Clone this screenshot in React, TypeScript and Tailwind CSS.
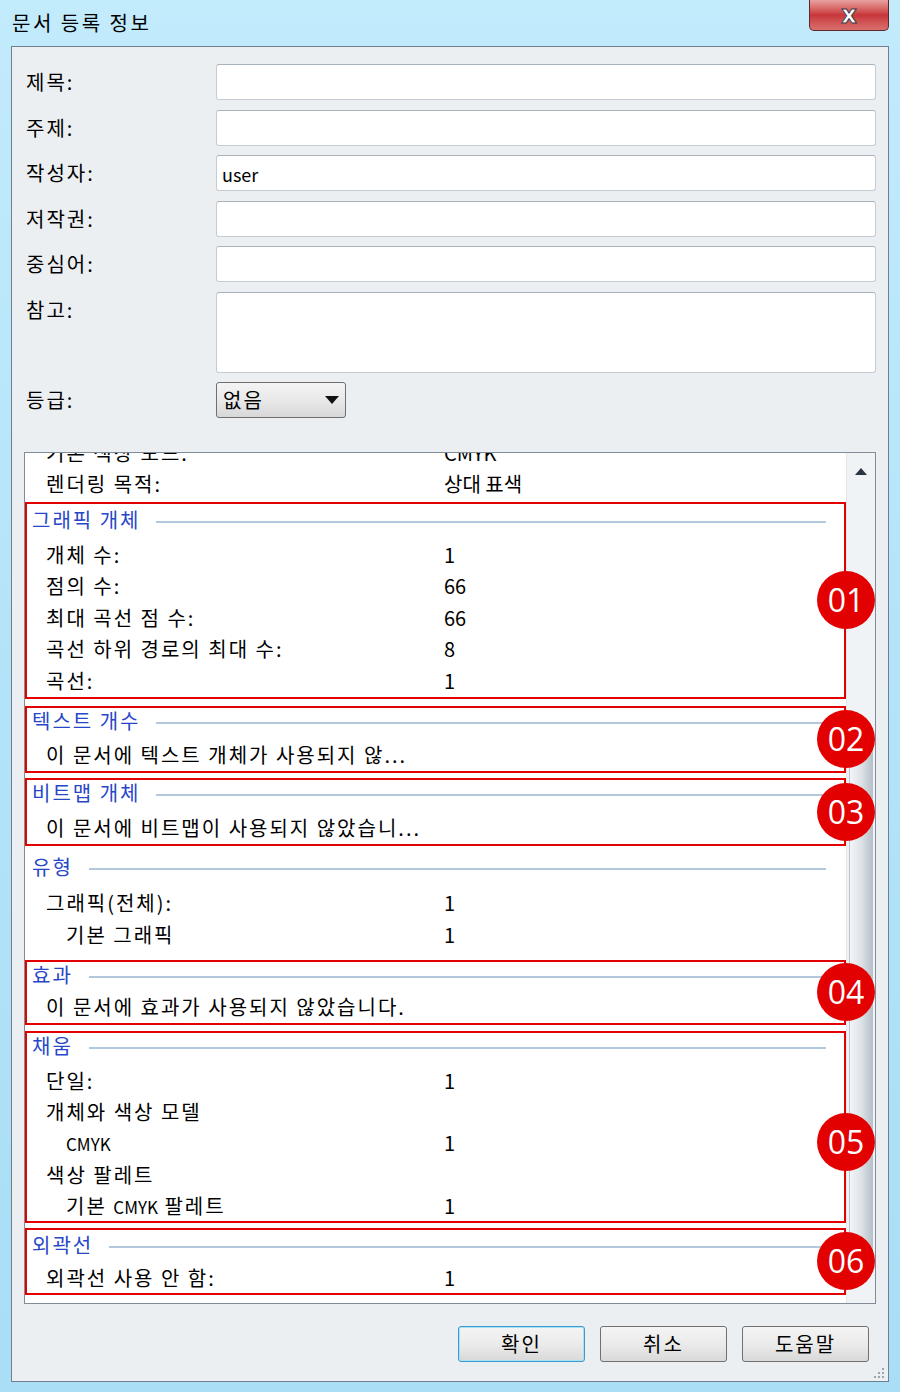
import type { ReactNode } from 'react';

const FONT = { fontFamily: '"Noto Sans CJK KR", "Noto Sans", sans-serif' };

type Row = { label: ReactNode; value?: string; indent?: boolean; h?: number };

/**
 * 속성 목록의 한 줄
 */
function PropRow({ label, value, indent, h = 31.5 }: Row) {
  return (
    <div className="flex items-center text-[20px] leading-none text-black" style={{ height: h }}>
      <div className={`w-[417px] shrink-0 tracking-[2px] ${indent ? 'pl-[39px]' : 'pl-[19px]'}`}>{label}</div>
      <div>{value}</div>
    </div>
  );
}

/**
 * 파란 제목 + 구분선
 */
function SectionHeader({ title, h, ty = 0 }: { title: string; h: number; ty?: number }) {
  return (
    <div className="flex items-start pl-[5px] pr-[18px]" style={{ height: h, paddingTop: ty }}>
      <span className="text-[20px] leading-[26px] tracking-[2px] text-[#2747c9]">{title}</span>
      <div className="mt-[14px] ml-[16px] h-[2px] flex-1 bg-[#b3c8dd]"></div>
    </div>
  );
}

/**
 * 번호 배지
 */
function Badge({ n, top }: { n: string; top?: number }) {
  return (
    <div
      className={`absolute right-[-31px] z-10 flex h-[58px] w-[58px] items-center justify-center rounded-full bg-[#e20000] text-[32px] leading-none text-white ${top === undefined ? 'top-1/2 -translate-y-1/2' : ''}`}
      style={{ fontFamily: '"Open Sans", "Noto Sans", sans-serif', ...(top !== undefined ? { top } : {}) }}
    >
      {n}
    </div>
  );
}

function Box({
  children,
  red,
  badge,
  badgeTop,
  className = '',
}: {
  children: ReactNode;
  red?: boolean;
  badge?: string;
  badgeTop?: number;
  className?: string;
}) {
  return (
    <div className={`relative border-2 ${red ? 'border-[#e20000]' : 'border-transparent'} ${className}`}>
      {children}
      {badge && <Badge n={badge} top={badgeTop} />}
    </div>
  );
}

function Field({ label, h = 36, value }: { label: string; h?: number; value?: string }) {
  return (
    <div className="flex items-start">
      <div className="flex h-[36px] w-[190px] shrink-0 items-center text-[20px] tracking-[2px] text-black">{label}</div>
      <div
        className="flex flex-1 items-start rounded-[3px] border border-[#c5ccd3] border-t-[#aab3bc] bg-white px-[5px] text-[18px] text-black"
        style={{ height: h }}
      >
        {value && <span className="mt-[5px]">{value}</span>}
      </div>
    </div>
  );
}

function Button({ label, primary }: { label: string; primary?: boolean }) {
  return (
    <button
      className={`flex h-[36px] w-[127px] items-center justify-center rounded-[3px] border bg-gradient-to-b from-[#f4f4f4] via-[#ebebeb] to-[#d9d9d9] text-[20px] tracking-[2px] text-black ${
        primary ? 'border-[#3a9ccc] shadow-[inset_0_0_0_1px_#a8e0f5]' : 'border-[#707070]'
      }`}
    >
      {label}
    </button>
  );
}

const Cmyk = () => <span className="text-[17px] tracking-normal">CMYK</span>;

export default function App() {
  return (
    <div
      className="relative h-[1392px] w-[900px] overflow-hidden bg-gradient-to-b from-[#c2ebfc] via-[#b3e3f8] to-[#a9def6]"
      style={FONT}
    >
      {/* 제목 표시줄 */}
      <div className="flex h-[46px] items-center pl-[12px]">
        <span className="text-[20px] tracking-[2.5px] text-black">문서 등록 정보</span>
      </div>
      <div className="absolute top-0 right-[11px] flex h-[31px] w-[80px] items-center justify-center rounded-b-[5px] border border-t-0 border-[#5c2a2a] bg-gradient-to-b from-[#e8a0a0] via-[#c7353a] to-[#d9706f]">
        <span
          className="text-[24px] font-bold leading-none text-white"
          style={{ fontFamily: '"DejaVu Sans", sans-serif', WebkitTextStroke: '1px #3a3a4a' }}
        >
          x
        </span>
      </div>

      {/* 본문 패널 */}
      <div className="mx-[11px] flex h-[1336px] flex-col border border-[#6d7f90] bg-[#eceff1]">
        {/* 입력 필드 */}
        <div className="flex flex-col gap-[9.5px] pt-[17px] pr-[12px] pl-[14px]">
          <Field label="제목:" />
          <Field label="주제:" />
          <Field label="작성자:" value="user" />
          <Field label="저작권:" />
          <Field label="중심어:" />
          <Field label="참고:" h={81} />
          <div className="flex items-start">
            <div className="flex h-[36px] w-[190px] shrink-0 items-center text-[20px] tracking-[2px] text-black">등급:</div>
            <div className="flex h-[36px] w-[130px] items-center justify-between rounded-[3px] border border-[#6f6f6f] bg-gradient-to-b from-[#f4f4f4] via-[#e9e9e9] to-[#d8d8d8] pr-[6px] pl-[6px] text-[20px] tracking-[2px] text-black">
              <span>없음</span>
              <svg width="14" height="8" viewBox="0 0 14 8">
                <path d="M0 0 L14 0 L7 8 Z" fill="#111" />
              </svg>
            </div>
          </div>
        </div>

        {/* 속성 목록 */}
        <div className="mx-[12px] mt-[34px] flex h-[852px] overflow-hidden border border-[#828c96] bg-white">
          <div className="relative flex-1">
            <div className="-mt-[18px] flex flex-col">
              <Box>
                <PropRow label="기본 색상 모드:" value="CMYK" />
                <PropRow label="렌더링 목적:" value="상대 표색" />
              </Box>
              <Box red badge="01">
                <SectionHeader title="그래픽 개체" h={35} ty={3} />
                <PropRow label="개체 수:" value="1" />
                <PropRow label="점의 수:" value="66" />
                <PropRow label="최대 곡선 점 수:" value="66" />
                <PropRow label="곡선 하위 경로의 최대 수:" value="8" />
                <PropRow label="곡선:" value="1" />
              </Box>
              <Box red badge="02" className="mt-[7px]">
                <SectionHeader title="텍스트 개수" h={32} />
                <PropRow label="이 문서에 텍스트 개체가 사용되지 않..." />
              </Box>
              <Box red badge="03" className="mt-[5px]">
                <SectionHeader title="비트맵 개체" h={32} />
                <PropRow label="이 문서에 비트맵이 사용되지 않았습니..." />
              </Box>
              <Box>
                <div className="h-[6px]"></div>
                <SectionHeader title="유형" h={34} />
                <PropRow label="그래픽(전체):" value="1" />
                <PropRow label="기본 그래픽" value="1" indent />
              </Box>
              <Box red badge="04" className="mt-[7px]">
                <SectionHeader title="효과" h={30} ty={-3} />
                <PropRow label="이 문서에 효과가 사용되지 않았습니다." />
              </Box>
              <Box red badge="05" badgeTop={80} className="mt-[5.5px]">
                <SectionHeader title="채움" h={33} />
                <PropRow label="단일:" value="1" h={31} />
                <PropRow label="개체와 색상 모델" h={31} />
                <PropRow label={<Cmyk />} value="1" indent h={31.5} />
                <PropRow label="색상 팔레트" h={31.5} />
                <PropRow label={<>기본 <Cmyk /> 팔레트</>} value="1" indent h={30} />
              </Box>
              <Box red badge="06" className="mt-[5px]">
                <SectionHeader title="외곽선" h={34} ty={2} />
                <PropRow label="외곽선 사용 안 함:" value="1" h={29} />
              </Box>
            </div>
          </div>

          {/* 스크롤바 */}
          <div className="flex w-[29px] shrink-0 flex-col border-l border-[#e3e7ea] bg-[#f0f3f5]">
            <div className="flex h-[36px] items-center justify-center">
              <svg width="12" height="7" viewBox="0 0 12 7">
                <path d="M0 7 L6 0 L12 7 Z" fill="#2a3540" />
              </svg>
            </div>
            <div className="mt-[255px] mx-[2px] h-[523px] rounded-[2px] border border-[#b9c3cc] bg-gradient-to-r from-[#f3f5f7] via-[#dde3e8] to-[#b9c2ca]"></div>
            <div className="flex h-[20px] items-center justify-center">
              <svg width="10" height="6" viewBox="0 0 10 6">
                <path d="M0 0 L10 0 L5 6 Z" fill="#5b6670" />
              </svg>
            </div>
          </div>
        </div>

        {/* 버튼 */}
        <div className="mt-[22px] flex justify-end gap-[15px] pr-[19px]">
          <Button label="확인" primary />
          <Button label="취소" />
          <Button label="도움말" />
        </div>

        <div className="mt-auto flex justify-end pr-[3px] pb-[2px]">
          <svg width="12" height="12" viewBox="0 0 12 12">
            <g fill="#9aa6b0">
              <rect x="9" y="1" width="2" height="2" />
              <rect x="5" y="5" width="2" height="2" />
              <rect x="9" y="5" width="2" height="2" />
              <rect x="1" y="9" width="2" height="2" />
              <rect x="5" y="9" width="2" height="2" />
              <rect x="9" y="9" width="2" height="2" />
            </g>
          </svg>
        </div>
      </div>
    </div>
  );
}
